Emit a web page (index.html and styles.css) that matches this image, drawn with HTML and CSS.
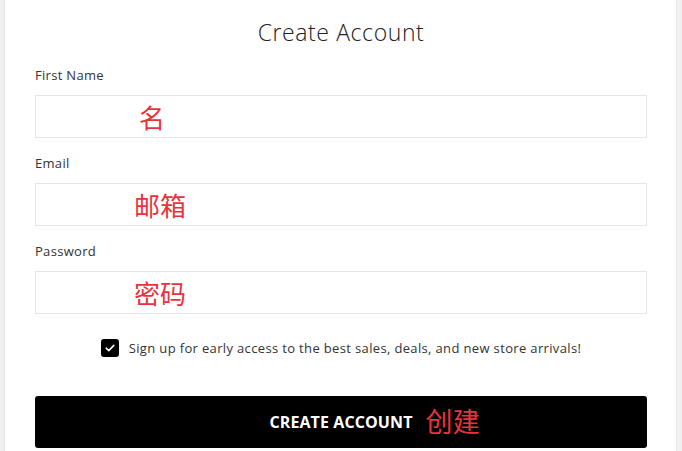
FILE: index.html
```html
<!DOCTYPE html>
<html lang="en">
<head>
<meta charset="utf-8">
<title>Create Account</title>
<link rel="stylesheet" href="styles.css">
</head>
<body>
<div class="page">
  <form class="form">
    <h1 class="title">Create Account</h1>
    <div class="field">
      <label class="label">First Name</label>
      <div class="input"><span class="note note-first">名</span></div>
    </div>
    <div class="field">
      <label class="label">Email</label>
      <div class="input"><span class="note">邮箱</span></div>
    </div>
    <div class="field">
      <label class="label">Password</label>
      <div class="input"><span class="note">密码</span></div>
    </div>
    <div class="check-row">
      <span class="checkbox">
        <svg width="10" height="8" viewBox="0 0 10 8"><path d="M1.2 4.2 L3.8 6.6 L8.8 1.4" fill="none" stroke="#fff" stroke-width="1.6" stroke-linecap="round" stroke-linejoin="round"/></svg>
      </span>
      <span class="check-text">Sign up for early access to the best sales, deals, and new store arrivals!</span>
    </div>
    <div class="button">
      <span class="button-text">CREATE ACCOUNT<span class="button-note">创建</span></span>
    </div>
  </form>
</div>
</body>
</html>
```
FILE: styles.css
```css
html, body {
  margin: 0;
  padding: 0;
}
body {
  background: #f0f0f0;
  font-family: "Open Sans", "Noto Sans CJK SC", sans-serif;
  color: #333;
  height: 451px;
  overflow: hidden;
}
.page {
  margin: 0 5px 0 4px;
  background: #fff;
  border-left: 1px solid #e6e6e6;
  border-right: 1px solid #e6e6e6;
  height: 451px;
  box-sizing: border-box;
}
.form {
  display: flex;
  flex-direction: column;
  padding: 17px 29px 0 30px;
}
.title {
  margin: 0;
  font-family: "Open Sans", sans-serif;
  font-weight: 300;
  font-size: 23px;
  line-height: 30px;
  color: #222;
  text-align: center;
  letter-spacing: 0.6px;
}
.field {
  display: flex;
  flex-direction: column;
  margin-top: 20px;
}
.field + .field {
  margin-top: 17px;
}
.label {
  font-size: 13px;
  line-height: 16px;
  letter-spacing: 0.3px;
  color: #333;
}
.input {
  margin-top: 12px;
  height: 43px;
  box-sizing: border-box;
  border: 1px solid #e6e6e6;
  display: flex;
  align-items: center;
  padding-left: 98px;
}
.note {
  font-family: "Noto Sans CJK SC", sans-serif;
  color: #e8333d;
  font-size: 26px;
  line-height: 30px;
}
.note-first {
  margin-left: 5px;
}
.check-row {
  display: flex;
  align-items: center;
  justify-content: center;
  margin-top: 25px;
  gap: 10px;
  padding-right: 0;
}
.checkbox {
  width: 18px;
  height: 18px;
  border-radius: 3px;
  background: #000;
  display: flex;
  align-items: center;
  justify-content: center;
}
.check-text {
  font-size: 13px;
  line-height: 18px;
  letter-spacing: 0.35px;
  color: #333;
}
.button {
  margin-top: 39px;
  height: 52px;
  background: #000;
  border-radius: 3px;
  display: flex;
  align-items: center;
  justify-content: center;
}
.button-text {
  position: relative;
  color: #fff;
  font-weight: 700;
  font-size: 16px;
  letter-spacing: 0.1px;
}
.button-note {
  position: absolute;
  left: 100%;
  margin-left: 13px;
  top: -5px;
  font-family: "Noto Sans CJK SC", sans-serif;
  font-weight: 400;
  color: #e8333d;
  font-size: 27px;
  line-height: 30px;
  white-space: nowrap;
}
```
